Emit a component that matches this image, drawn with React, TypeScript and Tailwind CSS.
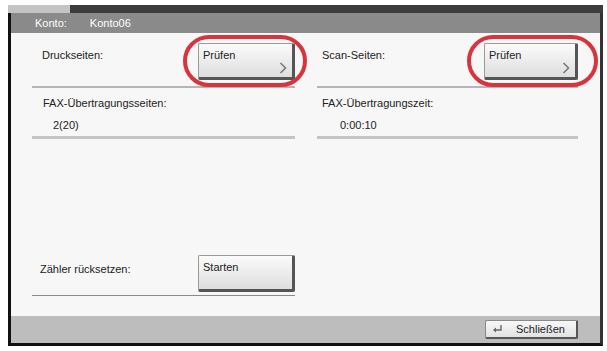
import React from 'react';

const font = { fontFamily: '"Liberation Sans", Arial, sans-serif' };

const KeyButton: React.FC<{ label: string; chevron?: boolean; className?: string }> = ({ label, chevron, className = '' }) => (
  <div
    className={`relative h-[37px] rounded-[2px] border border-[#9a9a9a] border-r-[3px] border-b-[3px] border-r-[#555] border-b-[#555] bg-gradient-to-b from-[#fbfbfb] to-[#dedede] text-[11px] text-[#222] ${className}`}
  >
    <span className="absolute left-[4px] top-[6px] leading-none">{label}</span>
    {chevron && (
      <svg className="absolute right-[5px] bottom-[3px]" width="8" height="12" viewBox="0 0 8 12">
        <path d="M1.5 1 L6.5 6 L1.5 11" fill="none" stroke="#7a7a7a" strokeWidth="1.6" />
      </svg>
    )}
  </div>
);

const Ring: React.FC<{ className: string }> = ({ className }) => (
  <div className={`pointer-events-none absolute rounded-[28px] border-[4px] border-[#d8343d] ${className}`} />
);

export default function App() {
  return (
    <div className="w-[607px] h-[351px] bg-white pt-[5px] pl-[8px]" style={font}>
      <div className="w-[595px] h-[341px] flex flex-col">
        {/* top strip */}
        <div className="flex h-[8px]">
          <div className="w-[62px] bg-[#c4c4c4]" />
          <div className="flex-1 bg-[#3c3c3c]" />
        </div>

        <div className="flex-1 flex flex-col border-l-[3px] border-r-[3px] border-b-[3px] border-l-[#111] border-r-[#333] border-b-[#111]">
          {/* header */}
          <div className="h-[20px] bg-[#8a8a8a] flex items-center text-[11px] text-white">
            <span className="ml-[24px]">Konto:</span>
            <span className="ml-[23px]">Konto06</span>
          </div>

          {/* content */}
          <div className="flex-1 bg-[#f7f7f7] flex flex-col pl-[21px] text-[11px] text-[#222]">
            <div className="flex pt-[10px]">
              {/* left column */}
              <div className="w-[263px]">
                <div className="flex">
                  <span className="ml-[10px] mt-[4px]">Druckseiten:</span>
                  <div className="relative ml-auto w-[97px]">
                    <KeyButton label="Prüfen" chevron />
                    <Ring className="-left-[15px] -right-[12px] -top-[8px] -bottom-[7px]" />
                  </div>
                </div>
                <div className="mt-[6px] h-[2px] bg-[#b5b5b5]" />
                <div className="ml-[11px] mt-[10px] leading-none">FAX-Übertragungsseiten:</div>
                <div className="ml-[21px] mt-[11px] leading-none">2(20)</div>
                <div className="mt-[5px] h-[3px] bg-[#c4c4c4]" />
              </div>

              {/* right column */}
              <div className="ml-[22px] w-[261px]">
                <div className="flex">
                  <span className="ml-[5px] mt-[4px]">Scan-Seiten:</span>
                  <div className="relative ml-auto w-[94px]">
                    <KeyButton label="Prüfen" chevron />
                    <Ring className="-left-[17px] -right-[20px] -top-[8px] -bottom-[7px]" />
                  </div>
                </div>
                <div className="mt-[6px] h-[2px] bg-[#b5b5b5]" />
                <div className="ml-[5px] mt-[10px] leading-none">FAX-Übertragungszeit:</div>
                <div className="ml-[23px] mt-[11px] leading-none">0:00:10</div>
                <div className="mt-[5px] h-[3px] bg-[#c4c4c4]" />
              </div>
            </div>

            <div className="flex-1" />

            <div className="w-[263px] mb-[20px]">
              <div className="flex">
                <span className="ml-[8px] mt-[6px]">Zähler rücksetzen:</span>
                <KeyButton label="Starten" className="ml-auto w-[97px]" />
              </div>
              <div className="mt-[3px] h-[1px] bg-[#8a8a8a]" />
            </div>
          </div>

          {/* footer */}
          <div className="h-[27px] bg-[#bdbdbd] flex items-center justify-end pr-[22px]">
            <div className="w-[93px] h-[19px] rounded-[2px] border border-[#8a8a8a] border-r-[2px] border-b-[2px] border-r-[#555] border-b-[#555] bg-gradient-to-b from-[#f8f8f8] to-[#e2e2e2] flex items-center text-[11px] text-[#222]">
              <svg className="ml-[6px]" width="11" height="10" viewBox="0 0 11 10">
                <path d="M9 1 V6 H2.5" fill="none" stroke="#666" strokeWidth="1.4" />
                <path d="M1 6 L4 3.5 V8.5 Z" fill="#666" />
              </svg>
              <span className="ml-[13px]">Schließen</span>
            </div>
          </div>
        </div>
      </div>
    </div>
  );
}
